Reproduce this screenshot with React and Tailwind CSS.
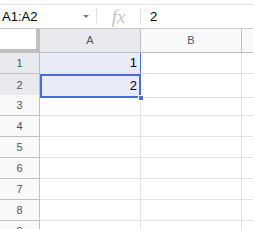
import React from "react";

const rows = [1, 2, 3, 4, 5, 6, 7, 8, 9];

export default function App() {
  return (
    <div className="w-[253px] h-[229px] overflow-hidden bg-white font-['Liberation_Sans',Arial,sans-serif] text-black">
      {/* top strip */}
      <div className="h-[5px] border-b border-[#e3e3e3]" />

      {/* formula bar */}
      <div className="flex h-[24px] items-center border-b border-[#c7c7c7]">
        <div className="flex w-[96px] items-center justify-between pl-[2px] pr-[7px]">
          <span className="text-[13px] leading-none">A1:A2</span>
          <span className="h-0 w-0 border-x-[3px] border-t-[3px] border-x-transparent border-t-[#7a7a7a]" />
        </div>
        <div className="h-[15px] w-px bg-[#e0e0e0]" />
        <div className="flex w-[43px] items-center justify-center">
          <span className="font-['Liberation_Serif',serif] text-[19px] italic leading-none text-[#c4c4c4]">fx</span>
        </div>
        <div className="h-[15px] w-px bg-[#e0e0e0]" />
        <span className="pl-[9px] text-[13px] leading-none">2</span>
      </div>

      {/* column headers */}
      <div className="grid h-[24px] grid-cols-[40px_101px_101px_1fr]">
        <div className="border-b-[4px] border-r-[4px] border-[#c0c0c0] bg-white" />
        <div className="flex items-center justify-center border-b border-r border-[#c0c0c0] bg-[#e8eaed] text-[11px] text-[#555]">A</div>
        <div className="flex items-center justify-center border-b border-r border-[#c0c0c0] bg-[#f8f9fa] text-[11px] text-[#555]">B</div>
        <div className="border-b border-[#c0c0c0] bg-[#f8f9fa]" />
      </div>

      {/* grid rows */}
      {rows.map((r) => {
        const sel = r <= 2;
        return (
          <div key={r} className="grid h-[21px] grid-cols-[40px_101px_101px_1fr]">
            <div
              className={`flex items-center justify-center border-b border-r border-[#c0c0c0] text-[11px] text-[#555] ${
                sel ? "bg-[#e8eaed]" : "bg-[#f8f9fa]"
              }`}
            >
              {r}
            </div>
            {r === 1 && (
              <div className="flex items-center justify-end border-b border-r border-b-[#e2e3e3] border-r-[#4a6cd4] bg-[#e9ebf8] pr-[3px] text-[13px]">
                1
              </div>
            )}
            {r === 2 && (
              <div className="relative flex items-center justify-end border-2 border-[#4a6cd4] bg-[#e9ebf8] pr-[2px] text-[13px]">
                2
                <div className="absolute bottom-[-5px] right-[-5px] h-[6px] w-[6px] border border-white bg-[#4a6cd4]" />
              </div>
            )}
            {r > 2 && <div className="border-b border-r border-[#e2e3e3]" />}
            <div className="border-b border-r border-[#e2e3e3]" />
            <div className="border-b border-[#e2e3e3]" />
          </div>
        );
      })}
    </div>
  );
}
